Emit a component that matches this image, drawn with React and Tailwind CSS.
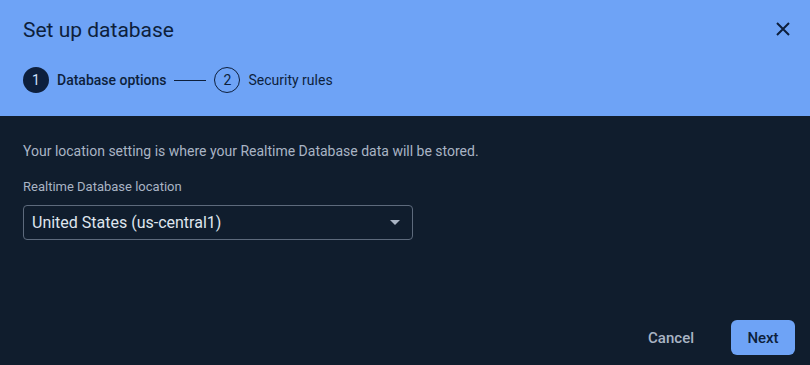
import React from 'react';

const Step = ({ n, label, active }) => (
    <div className="flex items-center">
        <div
            className={`w-[26px] h-[26px] rounded-full flex items-center justify-center text-[14px] ${
                active ? 'bg-[#0d1f3c] text-[#cfe0fb]' : 'border border-[#0d1f3c] text-[#0d1f3c]'
            }`}
        >
            {n}
        </div>
        <span className={`ml-[8px] text-[14px] text-[#0d1f3c] ${active ? 'font-medium' : ''}`}>{label}</span>
    </div>
);

export default function App() {
    return (
        <div className="w-[810px] h-[365px] flex flex-col bg-[#101d2d] font-['Roboto',sans-serif]">
            <div className="h-[116px] bg-[#6ea3f6] px-[23px] flex flex-col relative">
                <h1 className="mt-[16px] text-[21px] leading-[28px] text-[#0d1f3c]">Set up database</h1>
                <button className="absolute top-[19px] right-[17px] w-[20px] h-[20px] flex items-center justify-center text-[#0d1f3c]">
                    <svg width="16" height="16" viewBox="0 0 16 16">
                        <path d="M2 2L14 14M14 2L2 14" stroke="currentColor" strokeWidth="2" />
                    </svg>
                </button>
                <div className="mt-[23px] flex items-center">
                    <Step n="1" label="Database options" active />
                    <div className="w-[32px] h-px bg-[#0d1f3c] mx-[8px]" />
                    <Step n="2" label="Security rules" />
                </div>
            </div>
            <div className="flex-1 pl-[23px] pr-[15px] flex flex-col">
                <p className="mt-[27px] text-[14px] leading-[16px] text-[#a9b4c4]">
                    Your location setting is where your Realtime Database data will be stored.
                </p>
                <label className="mt-[20px] text-[13px] leading-[16px] text-[#a9b4c4]">Realtime Database location</label>
                <div className="mt-[10px] w-[390px] h-[35px] border border-[#5d6a7c] rounded-[4px] flex items-center justify-between pl-[8px] pr-[12px]">
                    <span className="text-[16px] text-[#dfe5ee]">United States (us-central1)</span>
                    <svg width="10" height="5" viewBox="0 0 10 5">
                        <path d="M0 0L5 5L10 0Z" fill="#a9b4c4" />
                    </svg>
                </div>
                <div className="flex-1" />
                <div className="flex justify-end items-center mb-[10px] gap-[16px]">
                    <button className="h-[35px] pt-[2px] px-[21px] text-[15px] font-medium text-[#a9b4c4]">Cancel</button>
                    <button className="h-[35px] pt-[2px] w-[64px] rounded-[6px] bg-[#6ea3f6] text-[15px] font-medium text-[#0d1f3c]">Next</button>
                </div>
            </div>
        </div>
    );
}
